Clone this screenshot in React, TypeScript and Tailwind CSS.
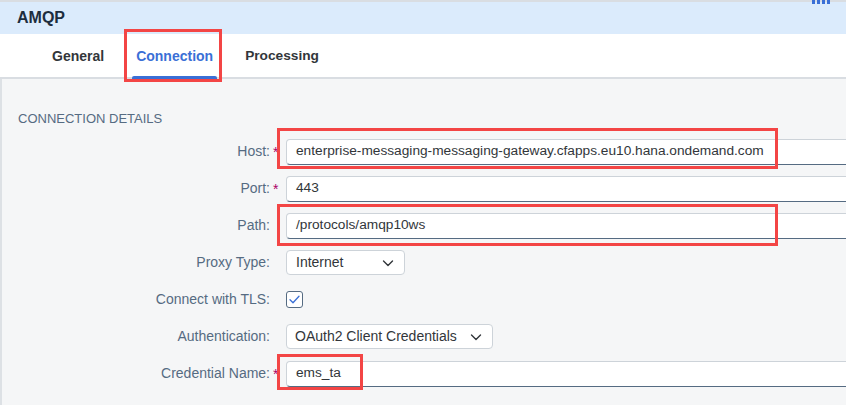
import React from "react";

const Chevron = () => (
  <svg width="14" height="14" viewBox="0 0 14 14" fill="none">
    <path d="M2.5 5l4.5 4.5L11.5 5" stroke="#32363a" strokeWidth="1.4" strokeLinecap="round" strokeLinejoin="round" />
  </svg>
);

function Row({ label, required, children }: { label: string; required?: boolean; children: React.ReactNode }) {
  return (
    <div className="flex h-[37px] items-center">
      <div className="w-[268px] shrink-0 text-right text-[14px] text-[#556b82]">{label}</div>
      <div className="w-[16px] shrink-0 pl-[3px] text-[14px] leading-none text-[#aa0066]">{required ? "*" : ""}</div>
      {children}
    </div>
  );
}

const Input = ({ value }: { value: string }) => (
  <div className="flex h-[26px] w-[600px] shrink-0 items-center rounded-[4px] border border-[#cdd3d9] border-b-[#556b82] bg-white pl-[9px] text-[13.7px] text-[#32363a]">
    {value}
  </div>
);

export default function App() {
  return (
    <div
      className="relative flex h-[405px] w-[846px] flex-col overflow-hidden bg-[#f5f6f7]"
      style={{ fontFamily: '"Liberation Sans", Arial, sans-serif' }}
    >
      {/* header */}
      <div className="relative h-[34px] shrink-0 border-t-2 border-[#d9dde2] bg-[#dbebfc]">
        <div className="flex h-[32px] items-center pl-[17px] text-[16px] font-bold text-[#1d2d3e]">AMQP</div>
        <div className="absolute left-[812px] top-[-2px] flex gap-[2px]">
          <div className="h-[4px] w-[3px] bg-[#3a6fd6]" />
          <div className="h-[4px] w-[3px] bg-[#3a6fd6]" />
          <div className="h-[4px] w-[3px] bg-[#3a6fd6]" />
          <div className="h-[4px] w-[3px] bg-[#3a6fd6]" />
        </div>
      </div>
      {/* tabs */}
      <div className="flex h-[45px] shrink-0 items-stretch gap-[24px] border-b-2 border-[#d9dde2] bg-white pl-[48px]">
        <div className="flex items-center px-[4px] pt-[1px] text-[14px] font-bold text-[#32363a]">General</div>
        <div className="relative flex items-center px-[4px] pt-[1px] text-[14px] font-bold text-[#3a6fd6]">
          Connection
          <div className="absolute bottom-[-2px] left-0 right-0 h-[3px] rounded-t-[2px] bg-[#3a6fd6]" />
        </div>
        <div className="flex items-center px-[4px] pt-[1px] text-[13.7px] font-bold text-[#32363a]">Processing</div>
      </div>
      {/* body */}
      <div className="flex-1 border-l-2 border-[#dde1e5] pt-[32px]">
        <div className="pl-[16px] text-[13px] uppercase leading-[16px] text-[#556b82]">Connection Details</div>
        <div className="pt-[6px]">
          <Row label="Host:" required>
            <Input value="enterprise-messaging-messaging-gateway.cfapps.eu10.hana.ondemand.com" />
          </Row>
          <Row label="Port:" required>
            <Input value="443" />
          </Row>
          <Row label="Path:">
            <Input value="/protocols/amqp10ws" />
          </Row>
          <Row label="Proxy Type:">
            <div className="flex h-[25px] w-[119px] shrink-0 items-center justify-between rounded-[4px] border border-[#cdd3d9] bg-white pl-[9px] pr-[9px] text-[14px] text-[#32363a]">
              Internet
              <Chevron />
            </div>
          </Row>
          <Row label="Connect with TLS:">
            <div className="flex h-[17px] w-[17px] shrink-0 items-center justify-center rounded-[3px] border border-[#556b82] bg-white">
              <svg width="11" height="9" viewBox="0 0 11 9" fill="none">
                <path d="M1 4.8l3 3L10 1.2" stroke="#3a6fd6" strokeWidth="1.3" strokeLinecap="round" strokeLinejoin="round" />
              </svg>
            </div>
          </Row>
          <Row label="Authentication:">
            <div className="flex h-[25px] w-[207px] shrink-0 items-center justify-between rounded-[4px] border border-[#cdd3d9] bg-white pl-[8px] pr-[9px] text-[14px] text-[#32363a]">
              OAuth2 Client Credentials
              <Chevron />
            </div>
          </Row>
          <Row label="Credential Name:" required>
            <Input value="ems_ta" />
          </Row>
        </div>
      </div>

      {/* red annotation boxes */}
      <div className="absolute left-[124px] top-[29px] h-[53px] w-[98px] border-[3px] border-[#f34545]" />
      <div className="absolute left-[277px] top-[128px] h-[41px] w-[501px] border-[3px] border-[#f34545]" />
      <div className="absolute left-[277px] top-[204px] h-[42px] w-[501px] border-[3px] border-[#f34545]" />
      <div className="absolute left-[277px] top-[354px] h-[36px] w-[86px] border-[3px] border-[#f34545]" />
    </div>
  );
}
